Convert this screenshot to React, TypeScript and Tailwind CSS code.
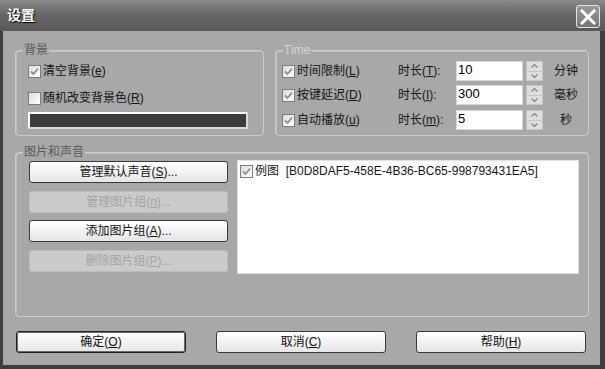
import React from 'react'

const font = { fontFamily: '"Liberation Sans", "Noto Sans CJK SC", sans-serif' }

function Check({ checked = true }: { checked?: boolean }) {
    return (
        <span className="w-[13px] h-[13px] shrink-0 border border-[#7c7c7c] bg-gradient-to-br from-[#dcdcdc] to-white flex items-center justify-center">
            {checked && (
                <svg width="9" height="9" viewBox="0 0 9 9">
                    <path d="M1 4.5 L3.5 7 L8 1.5" fill="none" stroke="#8e8e8e" strokeWidth="1.8" />
                </svg>
            )}
        </span>
    )
}

function Group({ label, labelColor, className, children }: { label: string; labelColor: string; className: string; children: React.ReactNode }) {
    return (
        <div className={`relative border border-[#cbcbcb] rounded-[4px] shadow-[inset_1px_1px_0_#bdbdbd] ${className}`}>
            <span className={`absolute -top-[9px] left-[7px] px-[1px] bg-[#a8a8a8] text-[12px] leading-[16px] ${labelColor}`}>{label}</span>
            {children}
        </div>
    )
}

function Btn({ children, disabled, className = '' }: { children: React.ReactNode; disabled?: boolean; className?: string }) {
    return disabled ? (
        <div className={`h-[22px] rounded-[3px] border border-[#bdbdbd] bg-[#cbcbcb] text-[#a3a3a3] text-[12px] flex items-center justify-center ${className}`}>
            {children}
        </div>
    ) : (
        <div className={`h-[22px] rounded-[3px] border border-[#3a3a3a] bg-gradient-to-b from-white to-[#e6e6e6] text-[#111] text-[12px] flex items-center justify-center ${className}`}>
            {children}
        </div>
    )
}

function Spin() {
    return (
        <div className="w-[17px] h-[20px] ml-[3px] flex flex-col bg-[#dedede] border border-[#c6c6c6]">
            <div className="flex-1 flex items-center justify-center border-b border-[#c6c6c6]">
                <svg width="7" height="4" viewBox="0 0 7 4"><path d="M0.5 3.5 L3.5 0.5 L6.5 3.5" fill="none" stroke="#8a8a8a" strokeWidth="1.4" /></svg>
            </div>
            <div className="flex-1 flex items-center justify-center">
                <svg width="7" height="4" viewBox="0 0 7 4"><path d="M0.5 0.5 L3.5 3.5 L6.5 0.5" fill="none" stroke="#8a8a8a" strokeWidth="1.4" /></svg>
            </div>
        </div>
    )
}

const timeRows = [
    { name: '时间限制', key: 'L', dur: 'T', value: '10', unit: '分钟' },
    { name: '按键延迟', key: 'D', dur: 'I', value: '300', unit: '毫秒' },
    { name: '自动播放', key: 'u', dur: 'm', value: '5', unit: '秒' },
]

export default function App() {
    return (
        <div className="w-[605px] h-[369px] bg-[#3e3e3e] flex flex-col text-[#151515]" style={font}>
            {/* title bar */}
            <div className="h-[31px] shrink-0 flex items-center justify-between pl-[7px] pr-[5px] bg-gradient-to-b from-[#8a8a8a] via-[#656565] to-[#5a5a5a]">
                <span className="text-white font-bold text-[14px] [text-shadow:1px_1px_1px_#000]">设置</span>
                <div className="w-[24px] h-[23px] mt-[2px] rounded-[3px] border border-[#e4e4e4] bg-gradient-to-b from-[#9a9a9a] to-[#767676] flex items-center justify-center">
                    <svg width="16" height="16" viewBox="0 0 16 16">
                        <path d="M2 2 L14 14 M14 2 L2 14" stroke="white" strokeWidth="3" strokeLinecap="square" />
                    </svg>
                </div>
            </div>

            {/* body */}
            <div className="flex-1 ml-[3px] mr-[5px] mb-[4px] bg-[#a8a8a8] pt-[19px] pl-[12px] pr-[11px] flex flex-col">
                <div className="flex gap-[11px]">
                    <Group label="背景" labelColor="text-[#5a5a5a]" className="w-[249px] h-[86px] pt-[11px] pl-[12px]">
                        <div className="h-[18px] flex items-center gap-[2px] text-[12px]">
                            <Check /> <span>清空背景(<u>e</u>)</span>
                        </div>
                        <div className="h-[18px] mt-[9px] flex items-center gap-[2px] text-[12px]">
                            <Check checked={false} /> <span>随机改变背景色(<u>R</u>)</span>
                        </div>
                        <div className="w-[220px] h-[17px] mt-[5px] border-2 border-white bg-[#3c3c3c] border-r-[#d8d8d8] border-b-[#d8d8d8]" />
                    </Group>

                    <Group label="Time" labelColor="text-[#d6d6d6]" className="w-[314px] h-[86px] pt-[10px] pl-[6px]">
                        {timeRows.map((r, i) => (
                            <div key={r.key} className={`h-[20px] flex items-center text-[12px] ${i === 1 ? 'mt-[4px]' : i === 2 ? 'mt-[5px]' : ''}`}>
                                <div className="w-[116px] flex items-center gap-[2px]">
                                    <Check /> <span>{r.name}(<u>{r.key}</u>)</span>
                                </div>
                                <span className="w-[58px]">时长(<u>{r.dur}</u>):</span>
                                <div className="w-[67px] h-[20px] bg-white border border-[#d6d6d6] text-[13px] leading-[15px] pl-[1px] text-black">{r.value}</div>
                                <Spin />
                                <span className="w-[42px] ml-[2px] text-center">{r.unit}</span>
                            </div>
                        ))}
                    </Group>
                </div>

                <Group label="图片和声音" labelColor="text-[#5a5a5a]" className="mt-[16px] h-[165px] pt-[8px] pl-[13px] pr-[9px] flex gap-[9px]">
                    <div className="w-[199px] flex flex-col gap-[7.5px]">
                        <Btn>管理默认声音(<u>S</u>)...</Btn>
                        <Btn disabled>管理图片组(<u>n</u>)...</Btn>
                        <Btn>添加图片组(<u>A</u>)...</Btn>
                        <Btn disabled>删除图片组(<u>P</u>)...</Btn>
                    </div>
                    <div className="flex-1 h-[114px] -mt-[1px] bg-white border border-[#e2e2e2] pt-[2px] pl-[2px]">
                        <div className="h-[16px] flex items-center gap-[2px] text-[12px]">
                            <Check /> <span>例图&nbsp;&nbsp;[B0D8DAF5-458E-4B36-BC65-998793431EA5]</span>
                        </div>
                    </div>
                </Group>

                <div className="mt-[14px] flex gap-[30px] pl-[1px]">
                    <Btn className="w-[170px] border-[#202020] shadow-[inset_0_0_0_1px_#6a6a6a]">确定(<u>O</u>)</Btn>
                    <Btn className="w-[170px]">取消(<u>C</u>)</Btn>
                    <Btn className="w-[170px]">帮助(<u>H</u>)</Btn>
                </div>
            </div>
        </div>
    )
}
